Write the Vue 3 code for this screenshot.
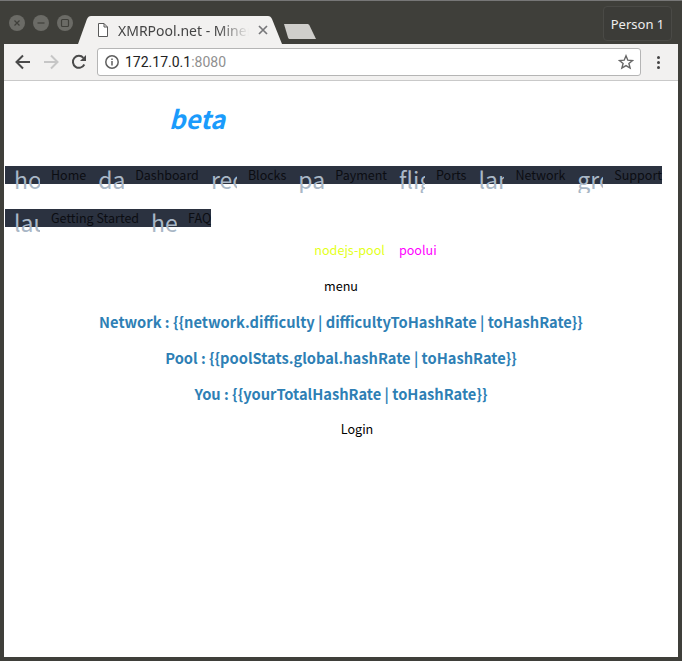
<template>
  <div class="window">
    <div class="titlebar">
      <div class="lights">
        <span class="light"><svg width="16" height="16" viewBox="0 0 16 16"><path d="M5.500 5.500l5 5M10.500 5.500l-5 5" stroke="#3f3f3a" stroke-width="1.200" /></svg></span>
        <span class="light"><svg width="16" height="16" viewBox="0 0 16 16"><path d="M4.500 8h7" stroke="#3f3f3a" stroke-width="1.200" /></svg></span>
        <span class="light"><svg width="16" height="16" viewBox="0 0 16 16"><rect x="4.500" y="4.500" width="7" height="7" rx="1" fill="none" stroke="#3f3f3a" stroke-width="1.200" /></svg></span>
      </div>
      <div class="tab">
        <svg class="tab-bg" width="204" height="28" viewBox="0 0 204 28"><path d="M0 28L9 3C10 1 11 0 13 0H190C192 0 193 1 194 3L204 28Z" fill="#f2f1f0" /></svg>
        <svg class="file-icon" width="12" height="14" viewBox="0 0 12 14"><path d="M1.500.5h5.500l3.500 3.500v9.500h-9zM7 .5v3.500h3.500" fill="#fff" stroke="#5a5a5a" /></svg>
        <span class="tab-title">XMRPool.net - Miner</span>
        <svg class="tab-close" width="10" height="10" viewBox="0 0 10 10"><path d="M1 1l8 8M9 1l-8 8" stroke="#77777a" stroke-width="1.700" /></svg>
      </div>
      <svg class="new-tab" width="33" height="15" viewBox="0 0 33 15"><path d="M1 0H24C25.500 0 26 .5 26.500 1.500L33 15H7C6 15 5.500 14.500 5 13.500Z" fill="#cfcecb" /></svg>
      <div class="person">Person 1</div>
    </div>
    <div class="toolbar">
      <svg class="nav-icon" width="16" height="16" viewBox="0 0 16 16"><path d="M15 8H2M8 1.500L1.500 8 8 14.500" fill="none" stroke="#4a4a4a" stroke-width="2" /></svg>
      <svg class="nav-icon fwd" width="16" height="16" viewBox="0 0 16 16"><path d="M1 8h13M8 1.500L14.500 8 8 14.500" fill="none" stroke="#c6c6c6" stroke-width="2" /></svg>
      <svg class="nav-icon reload" width="16" height="16" viewBox="0 0 16 16"><path d="M13.300 10.500A6 6 0 1 1 12.400 3.800" fill="none" stroke="#4a4a4a" stroke-width="2" /><path d="M15 1v6H9z" fill="#4a4a4a" /></svg>
      <div class="omnibox">
        <svg width="16" height="16" viewBox="0 0 16 16"><circle cx="8" cy="8" r="6.200" fill="none" stroke="#5f5f5f" stroke-width="1.500" /><path d="M8 7v4.500M8 4.500v1.500" stroke="#5f5f5f" stroke-width="1.500" /></svg>
        <span class="url">172.17.0.1<span class="port">:8080</span></span>
        <svg class="star" width="16" height="16" viewBox="0 0 16 16"><path d="M8 1.800l1.800 4.400 4.700.3-3.600 3 1.200 4.600-4.100-2.500-4.100 2.500 1.200-4.600-3.600-3 4.700-.3z" fill="none" stroke="#666" stroke-width="1.400" /></svg>
      </div>
      <div class="dots"><i></i><i></i><i></i></div>
    </div>
    <div class="page">
      <div class="beta">beta</div>
      <ul v-for="(bar, i) in bars" :key="i" class="nav">
        <li v-for="item in bar" :key="item.label">
          <span class="material">{{ item.icon }}</span>
          <a>{{ item.label }}</a>
        </li>
      </ul>
      <div class="links">
        <a class="nodejs">nodejs-pool</a>
        <a class="poolui">poolui</a>
      </div>
      <div class="menu">menu</div>
      <h3>Network : {{ networkRate }}</h3>
      <h3>Pool : {{ poolRate }}</h3>
      <h3>You : {{ yourRate }}</h3>
      <div class="login">Login</div>
    </div>
  </div>
</template>

<script setup>
const bars = [
  [
    { icon: 'home', label: 'Home' },
    { icon: 'dashboard', label: 'Dashboard' },
    { icon: 'reorder', label: 'Blocks' },
    { icon: 'payment', label: 'Payment' },
    { icon: 'flight_land', label: 'Ports' },
    { icon: 'language', label: 'Network' },
    { icon: 'group', label: 'Support' }
  ],
  [
    { icon: 'launch', label: 'Getting Started' },
    { icon: 'help', label: 'FAQ' }
  ]
]
const networkRate = '{{network.difficulty | difficultyToHashRate | toHashRate}}'
const poolRate = '{{poolStats.global.hashRate | toHashRate}}'
const yourRate = '{{yourTotalHashRate | toHashRate}}'
</script>

<style>
html, body { margin: 0; background: #fff; }
</style>

<style scoped>
.window { width: 682px; height: 661px; box-sizing: border-box; display: flex; flex-direction: column; overflow: hidden; background: #3f3f3a; border-top: 1px solid #777; font-family: "Noto Sans CJK SC", "Noto Sans", sans-serif; }
.titlebar { height: 43px; flex: none; display: flex; align-items: flex-end; position: relative; font-family: "Noto Sans", sans-serif; }
.lights { display: flex; gap: 8px; padding: 0 0 13px 9px; }
.light { width: 16px; height: 16px; border-radius: 50%; background: #6b6b66; display: block; }
.light svg { display: block; }
.tab { width: 204px; height: 28px; margin-left: 5px; position: relative; display: flex; align-items: center; padding-left: 19px; box-sizing: border-box; color: #454545; }
.tab-bg { position: absolute; left: 0; top: 0; }
.file-icon, .tab-title, .tab-close { position: relative; }
.file-icon { flex: none; }
.tab-title { margin-left: 9px; width: 131px; overflow: hidden; white-space: nowrap; font-size: 14px; -webkit-mask-image: linear-gradient(to right, #000 100px, transparent 131px); mask-image: linear-gradient(to right, #000 100px, transparent 131px); }
.tab-close { margin-left: 9px; flex: none; }
.new-tab { margin: 0 0 5px 1px; }
.person { position: absolute; right: 10px; top: 5px; width: 69px; height: 35px; line-height: 34px; text-align: center; font-size: 13px; color: #eee; background: #3c3c38; border: 1px solid #4a4a46; border-radius: 4px; box-sizing: border-box; }
.toolbar { height: 37px; flex: none; margin: 0 4px; box-sizing: border-box; background: #f2f1f0; border-bottom: 1px solid #c9c9c9; display: flex; align-items: center; padding: 0 0 0 11px; }
.nav-icon { flex: none; }
.fwd { margin-left: 12px; }
.reload { margin-left: 12px; }
.omnibox { margin-left: 10px; width: 544px; height: 28px; box-sizing: border-box; background: #fff; border: 1px solid #b5b5b5; border-radius: 3px; display: flex; align-items: center; padding: 0 6px 0 6px; }
.url { margin-left: 5px; font-size: 14px; color: #222; font-family: Roboto, sans-serif; }
.port { color: #8f8f8f; }
.star { margin-left: auto; }
.dots { margin-left: 16px; display: flex; flex-direction: column; gap: 2px; }
.dots i { width: 3px; height: 3px; border-radius: 50%; background: #444; display: block; }
.page { flex: 1; margin: 0 4px 4px; background: #fff; font-size: 12.6px; color: #000; min-height: 0; overflow: hidden; }
.beta { height: 85px; box-sizing: border-box; padding: 19px 0 0 165px; font-size: 25.5px; line-height: 36px; font-style: italic; font-weight: 700; color: #1a9bfc; }
.nav { list-style: none; margin: 0 0 0 1px; padding: 0; display: flex; width: fit-content; height: 18px; background: #2b3240; }
.nav + .nav { margin-top: 25px; }
.nav li { display: flex; height: 18px; }
.nav .material { width: 26px; height: 27px; margin: 0 11px 0 9px; overflow: hidden; font-size: 23px; line-height: 27px; color: #a9b7c6; white-space: nowrap; }
.nav a { font-size: 12.5px; line-height: 18px; color: #0b0d12; margin-right: 3px; white-space: nowrap; }
.nav li:last-child a { margin-right: 0; }
.links { margin-top: 13px; display: flex; justify-content: center; gap: 14px; height: 20px; line-height: 20px; padding-left: 69px; }
.nodejs { color: #e4ff1a; }
.poolui { color: #ff00ff; }
.menu { margin-top: 16px; text-align: center; line-height: 20px; }
h3 { margin: 16px 0 0; font-size: 14.67px; line-height: 20px; font-weight: 700; color: #2e7fb5; text-align: center; }
.login { margin-top: 15px; text-align: center; line-height: 20px; padding-left: 32px; }
</style>
